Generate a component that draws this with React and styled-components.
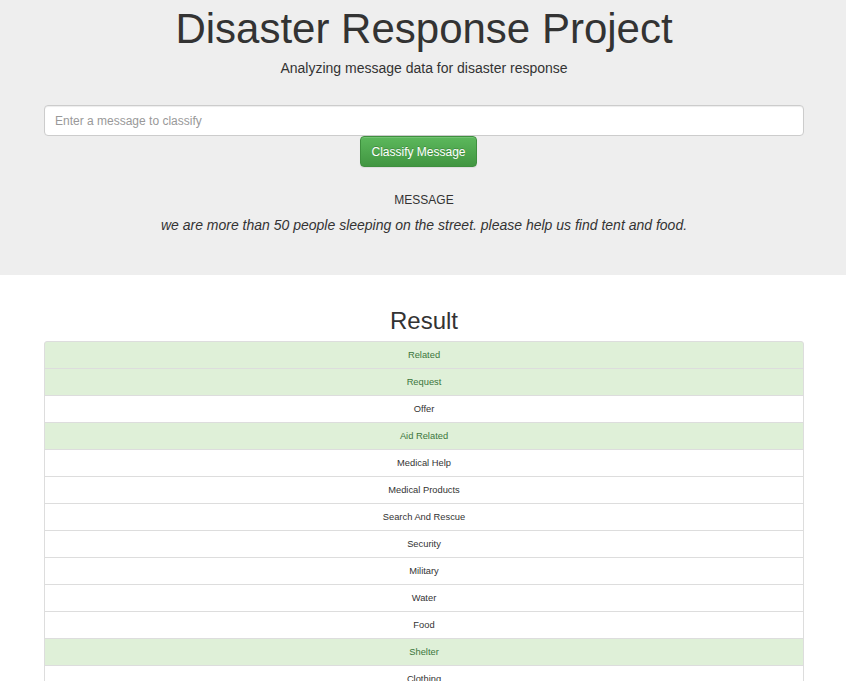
import styled, { createGlobalStyle } from "styled-components";

const GlobalStyle = createGlobalStyle`
  body {
    margin: 0;
    background: #ffffff;
    font-family: "Liberation Sans", Arial, sans-serif;
    color: #333333;
  }
`;

const categories = [
  { name: "Related", hit: true },
  { name: "Request", hit: true },
  { name: "Offer", hit: false },
  { name: "Aid Related", hit: true },
  { name: "Medical Help", hit: false },
  { name: "Medical Products", hit: false },
  { name: "Search And Rescue", hit: false },
  { name: "Security", hit: false },
  { name: "Military", hit: false },
  { name: "Water", hit: false },
  { name: "Food", hit: false },
  { name: "Shelter", hit: true },
  { name: "Clothing", hit: false },
  { name: "Money", hit: false },
  { name: "Missing People", hit: false },
  { name: "Refugees", hit: false },
  { name: "Death", hit: false },
  { name: "Other Aid", hit: false },
];

export default function App() {
  return (
    <>
      <GlobalStyle />
      <Jumbotron>
        <Container>
          <Title>Disaster Response Project</Title>
          <Lead>Analyzing message data for disaster response</Lead>
          <form onSubmit={(e) => e.preventDefault()}>
            <MessageInput type="text" placeholder="Enter a message to classify" />
            <ButtonRow>
              <ClassifyButton type="submit">Classify Message</ClassifyButton>
            </ButtonRow>
          </form>
          <MessageLabel>MESSAGE</MessageLabel>
          <MessageText>
            we are more than 50 people sleeping on the street. please help us find tent and food.
          </MessageText>
        </Container>
      </Jumbotron>
      <Container>
        <ResultTitle>Result</ResultTitle>
        <ListGroup>
          {categories.map((c) => (
            <ListItem key={c.name} $hit={c.hit}>
              {c.name}
            </ListItem>
          ))}
        </ListGroup>
      </Container>
    </>
  );
}

const Jumbotron = styled.div`
  background-color: #eeeeee;
  padding: 6px 0 0;
  height: 269px;
`;

const Container = styled.div`
  width: 760px;
  margin: 0 0 0 44px;
`;

const Title = styled.h1`
  margin: 0;
  font-size: 42px;
  line-height: 46px;
  font-weight: 400;
  text-align: center;
  color: #333333;
`;

const Lead = styled.p`
  margin: 6px 0 0;
  font-size: 14px;
  line-height: 20px;
  text-align: center;
  color: #333333;
`;

const MessageInput = styled.input`
  display: block;
  box-sizing: border-box;
  width: 100%;
  height: 31px;
  margin: 27px 0 0;
  padding: 0 10px;
  font-family: inherit;
  font-size: 12px;
  color: #555555;
  background: #ffffff;
  border: 1px solid #cccccc;
  border-radius: 4px;
  box-shadow: inset 0 1px 1px rgba(0, 0, 0, 0.075);
  outline: none;

  &::placeholder {
    color: #999999;
  }
`;

const ButtonRow = styled.div`
  display: flex;
  padding-left: 316px;
`;

const ClassifyButton = styled.button`
  box-sizing: border-box;
  width: 117px;
  height: 31px;
  padding: 0 10px;
  font-family: inherit;
  font-size: 12px;
  color: #ffffff;
  background-image: linear-gradient(to bottom, #5cb85c 0, #419641 100%);
  border: 1px solid #3e8f3e;
  border-radius: 4px;
  text-shadow: 0 -1px 0 rgba(0, 0, 0, 0.2);
  box-shadow: inset 0 1px 0 rgba(255, 255, 255, 0.15), 0 1px 1px rgba(0, 0, 0, 0.075);
  cursor: pointer;
`;

const MessageLabel = styled.div`
  margin-top: 25px;
  font-size: 12px;
  line-height: 16px;
  text-align: center;
  color: #333333;
`;

const MessageText = styled.div`
  margin-top: 8px;
  font-size: 14px;
  line-height: 18px;
  font-style: italic;
  text-align: center;
  color: #333333;
`;

const ResultTitle = styled.h2`
  margin: 32px 0 0;
  font-size: 24px;
  line-height: 28px;
  font-weight: 400;
  text-align: center;
  color: #333333;
`;

const ListGroup = styled.ul`
  list-style: none;
  margin: 6px 0 0;
  padding: 0;
`;

const ListItem = styled.li`
  box-sizing: border-box;
  height: 28px;
  margin-bottom: -1px;
  border: 1px solid #dddddd;
  display: flex;
  align-items: center;
  justify-content: center;
  font-size: 9.33px;
  color: ${({ $hit }) => ($hit ? "#3c763d" : "#333333")};
  background-color: ${({ $hit }) => ($hit ? "#dff0d8" : "#ffffff")};

  &:first-child {
    border-top-left-radius: 3px;
    border-top-right-radius: 3px;
  }
`;
